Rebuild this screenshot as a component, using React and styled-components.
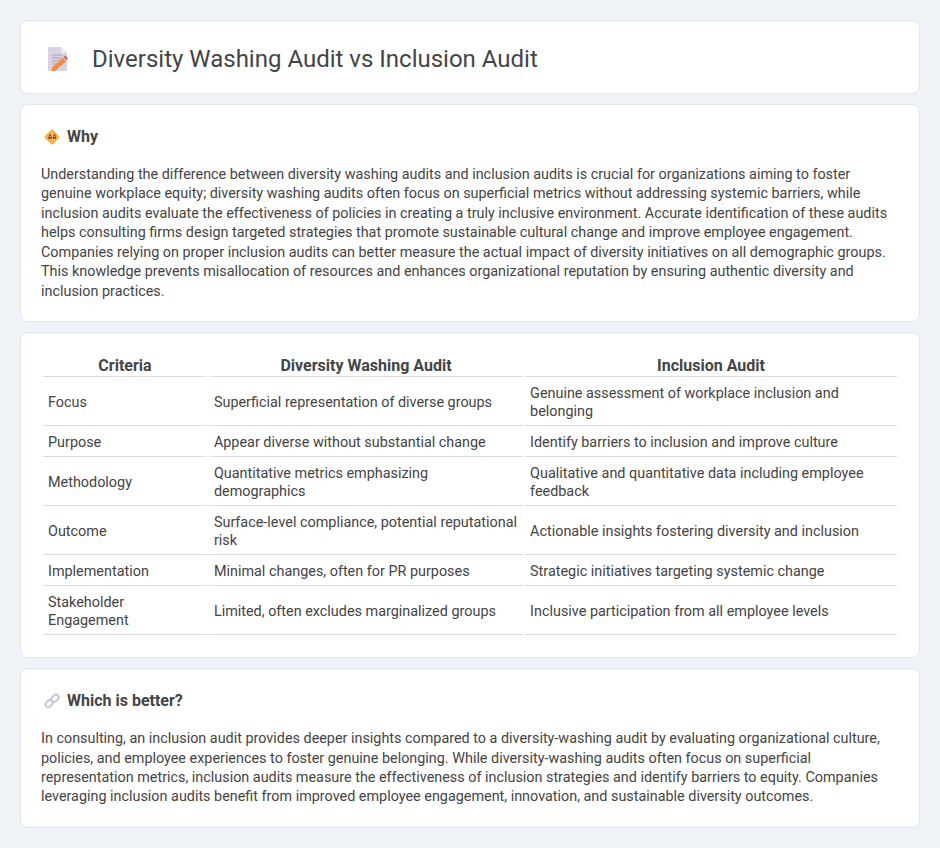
import React from 'react'
import styled, { createGlobalStyle } from 'styled-components'

const GlobalStyle = createGlobalStyle`
    html, body {
        margin: 0;
        padding: 0;
        background: #f0f4f8;
    }
    * {
        box-sizing: border-box;
    }
`

const Page = styled.div`
    display: flex;
    flex-direction: column;
    gap: 10px;
    padding: 20px;
    font-family: Roboto, sans-serif;
    color: #444;
`

const Card = styled.section`
    background: #fff;
    border: 1px solid #e2e8f0;
    border-radius: 8px;
    padding: 20px;
`

const Header = styled(Card)`
    display: flex;
    align-items: center;
    gap: 24px;
    height: 74px;
    padding: 3px 27px 0;
`

const Title = styled.h1`
    margin: 0;
    font-size: 24px;
    font-weight: 400;
    color: #444;
`

const SectionHead = styled.div`
    display: flex;
    align-items: center;
    gap: 6px;
    margin-bottom: 17px;
    padding: 1px 0 0 2px;
`

const SectionTitle = styled.h2`
    margin: 0;
    font-size: 16px;
    line-height: 22px;
    font-weight: 700;
    color: #444;
`

const Text = styled.p`
    margin: 0;
    font-size: 14.38px;
    line-height: 19.44px;
    color: #444;
`

const Table = styled.table`
    width: 100%;
    border-collapse: separate;
    border-spacing: 2px;
    font-size: 14.4px;
    line-height: 18px;
    color: #444;
`

const Th = styled.th`
    font-size: 16px;
    line-height: 21px;
    font-weight: 700;
    text-align: center;
    padding: 0;
    border-bottom: 1px solid #ddd;
`

const Td = styled.td`
    padding: 6px 5px 4px;
    text-align: left;
    border-bottom: 1px solid #ddd;
`

const DocIcon = () => (
    <svg width="20" height="24" viewBox="0 0 20 24">
        <path d="M0 0h13l6 6v18H0z" fill="#d9d2e5" />
        <path d="M13 0l6 6h-6z" fill="#eee9f3" />
        <path d="M4 8h10M4 11h11M4 14h9M4 17h5" stroke="#a9a2b4" strokeWidth="1.1" />
        <path d="M4 20.5L15 11l3 3.5L7 24H4z" fill="#f58a3c" />
        <path d="M15.5 10l1.8-1.6 2.7 3.2-1.8 1.6z" fill="#f2554d" />
    </svg>
)

const WhyIcon = () => (
    <svg width="18" height="18" viewBox="0 0 18 18">
        <rect x="3.3" y="3.3" width="11.4" height="11.4" rx="1.5" transform="rotate(45 9 9)" fill="#fbb04c" />
        <path d="M6 11V8.5M8 11V8.5M10.5 11V8.5M12.5 11V8.5M5.5 9.5h3M10 9.5h3" stroke="#5b4a3c" strokeWidth="1.2" />
        <circle cx="7" cy="7.2" r="1" fill="#5b4a3c" />
        <circle cx="11.5" cy="7.2" r="1" fill="#5b4a3c" />
    </svg>
)

const LinkIcon = () => (
    <svg width="18" height="18" viewBox="0 0 18 18" fill="none" stroke="#cfc6dc" strokeWidth="2.2">
        <rect x="2" y="9" width="8" height="5.4" rx="2.7" transform="rotate(-45 6 11.7)" />
        <rect x="8" y="3.6" width="8" height="5.4" rx="2.7" transform="rotate(-45 12 6.3)" />
    </svg>
)

const rows = [
    ['Focus', 'Superficial representation of diverse groups', 'Genuine assessment of workplace inclusion and belonging'],
    ['Purpose', 'Appear diverse without substantial change', 'Identify barriers to inclusion and improve culture'],
    ['Methodology', 'Quantitative metrics emphasizing demographics', 'Qualitative and quantitative data including employee feedback'],
    ['Outcome', 'Surface-level compliance, potential reputational risk', 'Actionable insights fostering diversity and inclusion'],
    ['Implementation', 'Minimal changes, often for PR purposes', 'Strategic initiatives targeting systemic change'],
    ['Stakeholder Engagement', 'Limited, often excludes marginalized groups', 'Inclusive participation from all employee levels'],
]

function App() {
    return (
        <Page>
            <GlobalStyle />
            <Header>
                <DocIcon />
                <Title>Diversity Washing Audit vs Inclusion Audit</Title>
            </Header>

            <Card>
                <SectionHead>
                    <WhyIcon />
                    <SectionTitle>Why</SectionTitle>
                </SectionHead>
                <Text>
                    Understanding the difference between diversity washing audits and inclusion audits is crucial for organizations aiming to foster genuine workplace equity; diversity washing audits often focus on superficial metrics without addressing systemic barriers, while inclusion audits evaluate the effectiveness of policies in creating a truly inclusive environment. Accurate identification of these audits helps consulting firms design targeted strategies that promote sustainable cultural change and improve employee engagement. Companies relying on proper inclusion audits can better measure the actual impact of diversity initiatives on all demographic groups. This knowledge prevents misallocation of resources and enhances organizational reputation by ensuring authentic diversity and inclusion practices.
                </Text>
            </Card>

            <Card>
                <Table>
                    <thead>
                        <tr>
                            <Th>Criteria</Th>
                            <Th>Diversity Washing Audit</Th>
                            <Th>Inclusion Audit</Th>
                        </tr>
                    </thead>
                    <tbody>
                        {rows.map((row) => (
                            <tr key={row[0]}>
                                {row.map((cell) => <Td key={cell}>{cell}</Td>)}
                            </tr>
                        ))}
                    </tbody>
                </Table>
            </Card>

            <Card>
                <SectionHead>
                    <LinkIcon />
                    <SectionTitle>Which is better?</SectionTitle>
                </SectionHead>
                <Text>
                    In consulting, an inclusion audit provides deeper insights compared to a diversity-washing audit by evaluating organizational culture, policies, and employee experiences to foster genuine belonging. While diversity-washing audits often focus on superficial representation metrics, inclusion audits measure the effectiveness of inclusion strategies and identify barriers to equity. Companies leveraging inclusion audits benefit from improved employee engagement, innovation, and sustainable diversity outcomes.
                </Text>
            </Card>
        </Page>
    )
}

export default App
